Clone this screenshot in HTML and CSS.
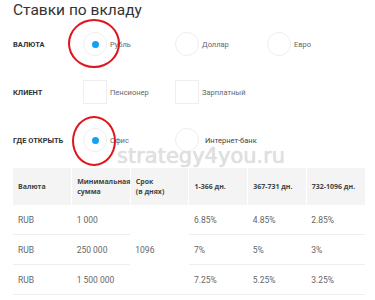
FILE: index.html
```html
<!DOCTYPE html>
<html lang="ru">
<head>
<meta charset="utf-8">
<link rel="stylesheet" href="styles.css">
</head>
<body>
<div class="page">
  <h1 class="title">Ставки по вкладу</h1>
  <div class="row">
    <div class="label">ВАЛЮТА</div>
    <div class="opt"><span class="radio checked"></span><span class="otext">Рубль</span></div>
    <div class="opt"><span class="radio"></span><span class="otext">Доллар</span></div>
    <div class="opt"><span class="radio"></span><span class="otext">Евро</span></div>
  </div>
  <div class="row">
    <div class="label">КЛИЕНТ</div>
    <div class="opt"><span class="box"></span><span class="otext">Пенсионер</span></div>
    <div class="opt"><span class="box"></span><span class="otext">Зарплатный</span></div>
  </div>
  <div class="row">
    <div class="label">ГДЕ ОТКРЫТЬ</div>
    <div class="opt"><span class="radio checked"></span><span class="otext">Офис</span></div>
    <div class="opt"><span class="radio"></span><span class="otext wide">Интернет-банк</span></div>
  </div>
  <table class="rates">
    <thead>
      <tr>
        <th>Валюта</th>
        <th>Минимальная сумма</th>
        <th>Срок<br>(в днях)</th>
        <th>1-366 дн.</th>
        <th>367-731 дн.</th>
        <th>732-1096 дн.</th>
      </tr>
    </thead>
    <tbody>
      <tr>
        <td>RUB</td><td>1 000</td><td rowspan="3">1096</td><td>6.85%</td><td>4.85%</td><td>2.85%</td>
      </tr>
      <tr>
        <td>RUB</td><td>250 000</td><td>7%</td><td>5%</td><td>3%</td>
      </tr>
      <tr>
        <td>RUB</td><td>1 500 000</td><td>7.25%</td><td>5.25%</td><td>3.25%</td>
      </tr>
    </tbody>
  </table>
  <div class="watermark">strategy4you.ru</div>
  <div class="mark mark-1"></div>
  <div class="mark mark-2"></div>
</div>
</body>
</html>
```
FILE: styles.css
```css
html, body {
  margin: 0;
  padding: 0;
  background: #fff;
}
.page {
  position: relative;
  width: 375px;
  height: 300px;
  overflow: hidden;
  font-family: Roboto, "Liberation Sans", sans-serif;
}
.title {
  margin: 0;
  padding-left: 13px;
  height: 21px;
  line-height: 21px;
  font-size: 15.5px;
  font-weight: 400;
  color: #333;
}
.row {
  display: flex;
  align-items: center;
  height: 48px;
  padding-left: 13px;
}
.row:first-of-type {
  margin-top: -1px;
}
.label {
  width: 70px;
  font-size: 7.5px;
  font-weight: 700;
  color: #333;
}
.opt {
  display: flex;
  align-items: center;
  width: 92px;
}
.radio, .box {
  box-sizing: border-box;
  width: 24px;
  height: 24px;
  border: 1px solid #eee;
  display: flex;
  align-items: center;
  justify-content: center;
  flex: none;
}
.radio {
  border-radius: 50%;
}
.radio.checked::after {
  content: "";
  width: 7px;
  height: 7px;
  border-radius: 50%;
  background: #11a3f0;
}
.otext {
  margin-left: 3px;
  font-size: 7.5px;
  color: #666;
}
.otext.wide {
  margin-left: 6px;
  color: #444;
}
.rates {
  margin: 4px 0 0 13px;
  width: 352px;
  border-collapse: collapse;
  table-layout: fixed;
}
.rates th {
  background: #f4f4f4;
  height: 37px;
  padding: 0 0 0 5px;
  text-align: left;
  vertical-align: middle;
  font-family: "Open Sans", "Liberation Sans", sans-serif;
  font-size: 7px;
  line-height: 10px;
  font-weight: 700;
  color: #444;
  border-right: 1px solid #fff;
}
.rates th:last-child {
  border-right: none;
}
.rates td {
  height: 29px;
  padding: 0 0 0 5px;
  vertical-align: middle;
  font-size: 8.5px;
  color: #666;
  border-bottom: 1px solid #eee;
}
.watermark {
  position: absolute;
  left: 117px;
  top: 144px;
  font-family: "DejaVu Sans", sans-serif;
  font-size: 21px;
  color: #e0e0e0;
  text-shadow: 0 0 1px #d2d2d2;
}
.mark {
  position: absolute;
  box-sizing: border-box;
  border: 2.5px solid #e0141b;
  border-radius: 50%;
}
.mark-1 {
  left: 68px;
  top: 19px;
  width: 52px;
  height: 49px;
}
.mark-2 {
  left: 72px;
  top: 116px;
  width: 44px;
  height: 50px;
}
```
